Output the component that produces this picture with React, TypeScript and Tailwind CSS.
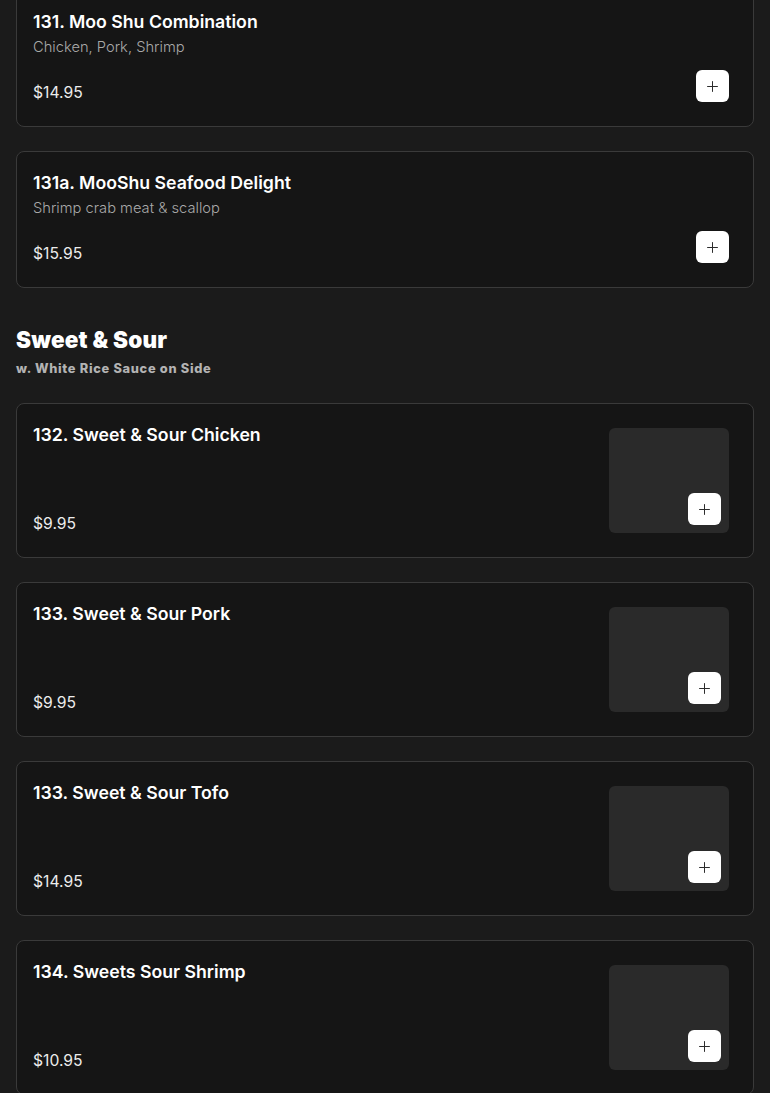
import { Plus } from "lucide-react";

type Item = { name: string; desc?: string; price: string; image?: boolean };

const moo: Item[] = [
  { name: "131. Moo Shu Combination", desc: "Chicken, Pork, Shrimp", price: "$14.95" },
  { name: "131a. MooShu Seafood Delight", desc: "Shrimp crab meat & scallop", price: "$15.95" },
];

const sweetSour: Item[] = [
  { name: "132. Sweet & Sour Chicken", price: "$9.95", image: true },
  { name: "133. Sweet & Sour Pork", price: "$9.95", image: true },
  { name: "133. Sweet & Sour Tofo", price: "$14.95", image: true },
  { name: "134. Sweets Sour Shrimp", price: "$10.95", image: true },
];

function AddButton() {
  return (
    <button className="flex h-8 w-[33px] items-center justify-center rounded-md bg-white text-[#2a2a2a]">
      <Plus size={17} strokeWidth={1.4} />
    </button>
  );
}

function ItemCard({ item }: { item: Item }) {
  return (
    <div className="flex min-h-[137px] rounded-lg border border-[#3a3a3a] bg-[#151515]">
      <div className="flex flex-1 flex-col pl-4 pt-[17px] pb-[21px]">
        <div className="text-[17.7px] font-semibold leading-7 text-white">{item.name}</div>
        {item.desc && (
          <div className="mt-px text-[14.7px] font-light leading-5 text-[#a9a9a9]">{item.desc}</div>
        )}
        <div className="mt-auto text-[15.7px] leading-6 text-[#ececec]">{item.price}</div>
      </div>
      {item.image ? (
        <div className="m-6 flex h-[105px] w-[120px] items-end justify-end rounded-md bg-[#2a2a2a] p-2">
          <AddButton />
        </div>
      ) : (
        <div className="flex items-end p-6">
          <AddButton />
        </div>
      )}
    </div>
  );
}

export default function App() {
  return (
    <div
      className="min-h-screen overflow-hidden bg-[#1b1b1b] px-4"
      style={{ fontFamily: "Inter, 'Noto Sans', sans-serif" }}
    >
      <div className="-mt-[10px] flex flex-col gap-6">
        {moo.map((it) => (
          <ItemCard key={it.name} item={it} />
        ))}
      </div>

      <div className="pt-[38px] pb-[25px]">
        <h2 className="text-[22.5px] font-black leading-7 tracking-[0.2px] text-white">Sweet &amp; Sour</h2>
        <p className="mt-[6px] text-[12.8px] font-extrabold leading-[18px] tracking-[0.7px] text-[#b3b3b3]">
          w. White Rice Sauce on Side
        </p>
      </div>

      <div className="flex flex-col gap-6">
        {sweetSour.map((it) => (
          <ItemCard key={it.name} item={it} />
        ))}
      </div>
    </div>
  );
}
